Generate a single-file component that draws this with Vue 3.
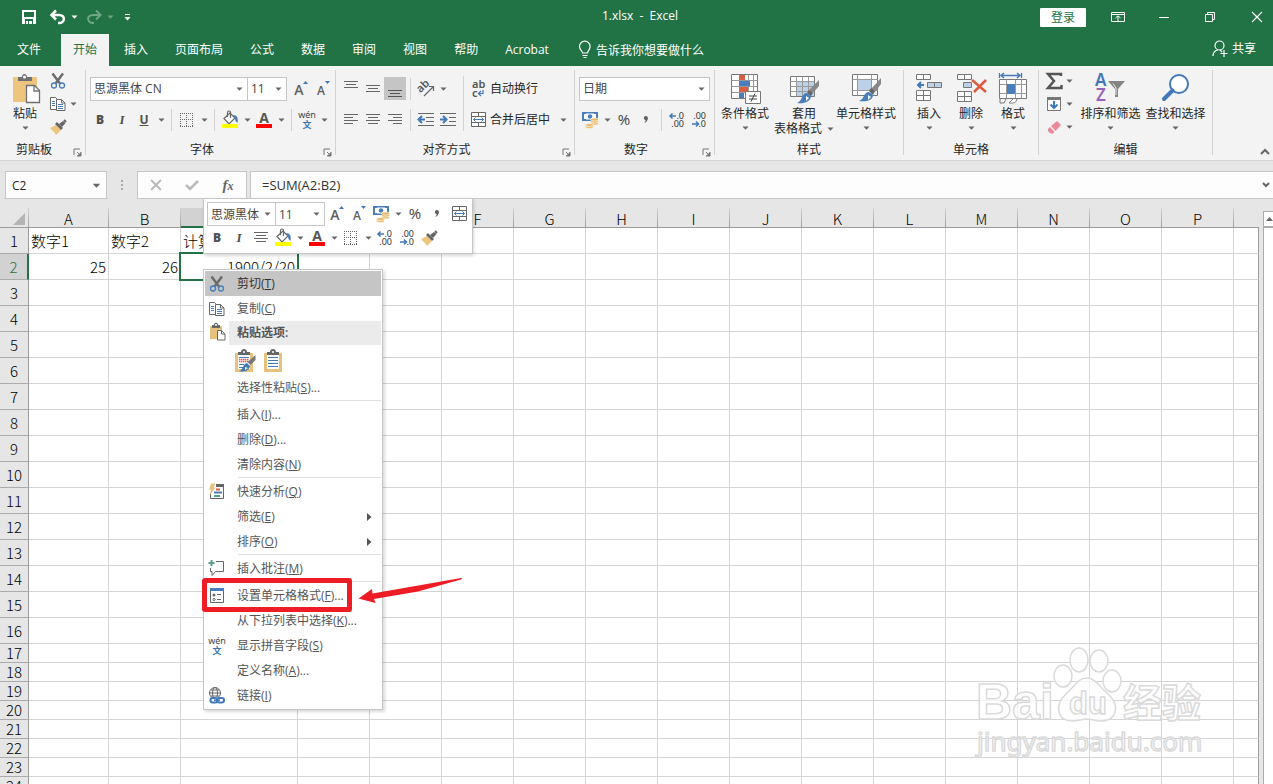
<script setup>
import { h } from 'vue'

const tabs = ['插入', '页面布局', '公式', '数据', '审阅', '视图', '帮助', 'Acrobat']

// Lettering that sits inside some of the toolbar icons.
const OS = 'Open Sans'
const NS = 'Noto Sans'
const letters = {
  bold: [{ t: 'B', x: 11, y: 15, a: 'middle', f: OS, w: 800, s: 12, c: '#505050' }],
  italic: [{ t: 'I', x: 11, y: 15, a: 'middle', f: 'Liberation Serif', w: 700, s: 13, c: '#505050', i: 1 }],
  underline: [{ t: 'U', x: 11, y: 15, a: 'middle', f: OS, w: 700, s: 12, c: '#505050' }],
  fontcolor: [{ t: 'A', x: 11, y: 14, a: 'middle', f: OS, w: 700, s: 14, c: '#555' }],
  pinyin: [
    { t: 'wén', x: 11, y: 9, a: 'middle', f: NS, w: 400, s: 9, c: '#444' },
    { t: '文', x: 11, y: 19, a: 'middle', f: 'Noto Sans CJK SC', w: 700, s: 9, c: '#3f76b5' },
  ],
  grow: [{ t: 'A', x: 9, y: 17, a: 'middle', f: OS, w: 600, s: 14, c: '#606060' }],
  shrink: [{ t: 'A', x: 9, y: 17, a: 'middle', f: OS, w: 600, s: 12, c: '#606060' }],
  orient: [{ t: 'ab', x: 3, y: 13, f: NS, w: 600, s: 11, c: '#555', r: 'rotate(-45 7 11)' }],
  wrap: [
    { t: 'ab', x: 5, y: 10, f: NS, w: 600, s: 11, c: '#555' },
    { t: 'c', x: 5, y: 19, f: NS, w: 600, s: 11, c: '#555' },
  ],
  percent: [{ t: '%', x: 11, y: 16, a: 'middle', f: OS, w: 400, s: 15, c: '#444' }],
  incdec: [
    { t: '.0', x: 18, y: 10, a: 'end', f: NS, w: 400, s: 9, c: '#333' },
    { t: '.00', x: 18, y: 18, a: 'end', f: NS, w: 400, s: 9, c: '#333' },
  ],
  decdec: [
    { t: '.00', x: 18, y: 10, a: 'end', f: NS, w: 400, s: 9, c: '#333' },
    { t: '.0', x: 18, y: 18, a: 'end', f: NS, w: 400, s: 9, c: '#333' },
  ],
  sortfilter: [
    { t: 'A', x: 0, y: 14, f: NS, w: 600, s: 17, c: '#4078b8' },
    { t: 'Z', x: 1, y: 29, f: NS, w: 600, s: 17, c: '#9562b8' },
  ],
}
const lettersOnly = ['bold', 'italic', 'pinyin', 'percent']

const Glyph = ({ n }) => h('svg', { viewBox: n === 'sortfilter' ? '0 0 32 32' : '0 0 22 22', 'aria-hidden': 'true' }, [
  lettersOnly.includes(n) ? null : h('use', { href: '#' + n }),
  ...(letters[n] || []).map(g => h('text', {
    x: g.x, y: g.y, fill: g.c, transform: g.r,
    'text-anchor': g.a, 'font-family': g.f, 'font-weight': g.w, 'font-size': g.s,
    'font-style': g.i ? 'italic' : undefined,
  }, g.t)),
])
Glyph.props = ['n']

const fontTools = [
  { i: 'bold', l: '加粗' }, { i: 'italic', l: '倾斜' }, { i: 'underline', l: '下划线', d: 1 }, 's',
  { i: 'border', l: '边框', d: 1 }, 's',
  { i: 'bucket', l: '填充颜色', d: 1 }, { i: 'fontcolor', l: '字体颜色', d: 1 }, 's',
  { i: 'pinyin', l: '拼音', d: 1 },
]
const alignTop = [{ i: 'vtop', l: '顶端对齐' }, { i: 'vmid', l: '垂直居中' }, { i: 'vbot', l: '底端对齐', on: 1 }, 's', { i: 'orient', l: '方向', d: 1 }]
const alignBottom = [{ i: 'left', l: '左对齐' }, { i: 'center', l: '居中' }, { i: 'right', l: '右对齐' }, 's', { i: 'outdent', l: '减少缩进量' }, { i: 'indent', l: '增加缩进量' }]
const numberTools = [{ i: 'money', l: '会计数字格式', d: 1 }, { i: 'percent', l: '百分比样式' }, { i: 'comma', l: '千位分隔样式' }, 's', { i: 'incdec', l: '增加小数位数' }, { i: 'decdec', l: '减少小数位数' }]
const miniTop = [{ i: 'grow', l: '增大字号' }, { i: 'shrink', l: '减小字号' }, { i: 'money', l: '会计数字格式', d: 1 }, { i: 'percent', l: '百分比样式' }, { i: 'comma', l: '千位分隔样式' }, { i: 'merge', l: '合并后居中' }]
const miniBottom = [{ i: 'bold', l: '加粗' }, { i: 'italic', l: '倾斜' }, { i: 'center', l: '居中' }, { i: 'bucket', l: '填充颜色', d: 1 }, { i: 'fontcolor', l: '字体颜色', d: 1 }, { i: 'border', l: '边框', d: 1 }, { i: 'incdec', l: '增加小数位数' }, { i: 'decdec', l: '减少小数位数' }, { i: 'brush', l: '格式刷' }]

const editTools = [{ i: 'sum', l: '自动求和' }, { i: 'fill', l: '填充' }, { i: 'eraser', l: '清除' }]

const menu = [
  { t: '剪切', k: 'T', i: 'cut', on: 1 },
  { t: '复制', k: 'C', i: 'copy' },
  { t: '粘贴选项:', i: 'paste', head: 1 },
  { icons: 1 },
  { t: '选择性粘贴', k: 'S', e: '...' },
  { sep: 1 },
  { t: '插入', k: 'I', e: '...' },
  { t: '删除', k: 'D', e: '...' },
  { t: '清除内容', k: 'N' },
  { sep: 1 },
  { t: '快速分析', k: 'Q', i: 'quick' },
  { t: '筛选', k: 'E', sub: 1 },
  { t: '排序', k: 'O', sub: 1 },
  { sep: 1 },
  { t: '插入批注', k: 'M', i: 'comment' },
  { sep: 1 },
  { t: '设置单元格格式', k: 'F', e: '...', i: 'format' },
  { t: '从下拉列表中选择', k: 'K', e: '...' },
  { t: '显示拼音字段', k: 'S', i: 'pinyin' },
  { t: '定义名称', k: 'A', e: '...' },
  { t: '链接', k: 'I', i: 'link' },
]

const cols = 'ABCDEFGHIJKLMNOP'.split('')
const rows = Array.from({ length: 24 }, (_, n) => n + 1)
const cells = {
  A1: '数字1', B1: '数字2', C1: '计算结果',
  A2: '25', B2: '26', C2: '1900/2/20',
}
</script>

<template>
  <div class="excel">
    <svg class="defs" aria-hidden="true">
      <symbol id="caret" viewBox="0 0 7 4"><path d="M.5 0.500h6L3.500 3.700z" fill="currentColor" /></symbol>
      <symbol id="launch" viewBox="0 0 9 9"><path d="M1 7V1h6M4 4l3 3M8 4v4H4" fill="none" stroke="#777" /><path d="M8 4v4H4z" fill="#777" /></symbol>
      <symbol id="underline" viewBox="0 0 22 22"><path d="M6.500 16.500h9" stroke="#505050" /></symbol>
      <symbol id="border" viewBox="0 0 22 22"><path d="M4.500 4v14M10.500 4v14M16.500 4v14" stroke="#666" stroke-dasharray="1 1" /><path d="M4 4.500h13M4 10.500h13M4 17.500h13" stroke="#666" stroke-dasharray="1 1" /></symbol>
      <symbol id="bucket" viewBox="0 0 22 22"><path d="M5 9.500L11 4l5 5-6 6z" fill="#fff" stroke="#666" stroke-width="1.200" /><path d="M8.500 8V3.500c0-2 3-2 3 0V9" fill="none" stroke="#666" stroke-width="1.200" /><path d="M14 6c4 0 5.500 3 4.500 8-1-1-2.500-2-2.500-4z" fill="#4a7ebb" /><path d="M3 15h16v4H3z" fill="#ff0" /></symbol>
      <symbol id="fontcolor" viewBox="0 0 22 22"><path d="M3 15h16v4H3z" fill="#f00" /></symbol>
      <symbol id="grow" viewBox="0 0 22 22"><path d="M13 6l2.500-3L18 6z" fill="#4078b8" /></symbol>
      <symbol id="shrink" viewBox="0 0 22 22"><path d="M13 3h5l-2.500 3z" fill="#4078b8" /></symbol>
      <symbol id="vtop" viewBox="0 0 22 22"><path d="M4 3.500h14M6 6.500h10M4 9.500h14" stroke="#666" /></symbol>
      <symbol id="vmid" viewBox="0 0 22 22"><path d="M4 7.500h14M6 10.500h10M4 13.500h14" stroke="#666" /></symbol>
      <symbol id="vbot" viewBox="0 0 22 22"><path d="M4 12.500h14M6 15.500h10M4 18.500h14" stroke="#555" /></symbol>
      <symbol id="left" viewBox="0 0 22 22"><path d="M4 5.500h14M4 8.500h9M4 11.500h14M4 14.500h9" stroke="#666" /></symbol>
      <symbol id="center" viewBox="0 0 22 22"><path d="M4 5.500h14M6 8.500h10M4 11.500h14M6 14.500h10" stroke="#666" /></symbol>
      <symbol id="right" viewBox="0 0 22 22"><path d="M4 5.500h14M9 8.500h9M4 11.500h14M9 14.500h9" stroke="#666" /></symbol>
      <symbol id="orient" viewBox="0 0 22 22"><path d="M9 18l9-9M14 8.500h4.500V13" fill="none" stroke="#666" stroke-width="1.200" /></symbol>
      <symbol id="outdent" viewBox="0 0 22 22"><path d="M3 4.500h16M11 8.500h8M11 12.500h8M3 16.500h16" stroke="#666" /><path d="M4 10.500h6M7 7l-3.500 3.500L7 14" fill="none" stroke="#4078b8" stroke-width="2" /></symbol>
      <symbol id="indent" viewBox="0 0 22 22"><path d="M3 4.500h16M12 8.500h7M12 12.500h7M3 16.500h16" stroke="#666" /><path d="M3 10.500h6M6 7l3.500 3.500L6 14" fill="none" stroke="#4078b8" stroke-width="2" /></symbol>
      <symbol id="wrap" viewBox="0 0 22 22"><path d="M16 12v3.500h-4M14 13l-2.500 2.500L14 18" fill="none" stroke="#4078b8" stroke-width="1.200" /></symbol>
      <symbol id="merge" viewBox="0 0 22 22"><path d="M4.500 3.500h14v14h-14zM4.500 7.500h14M4.500 13.500h14M11.500 3.500v4M11.500 13.500v4" fill="#fff" stroke="#666" /><path d="M6.500 10.500h10M8.500 8.500l-2 2 2 2M14.500 8.500l2 2-2 2" fill="none" stroke="#4078b8" /></symbol>
      <symbol id="money" viewBox="0 0 22 22"><path d="M3 3h16v9H3z" fill="#4a7ebb" /><path d="M5 5h2v-.500h8V5h2v5h-2v.500H7V10H5z" fill="#fff" /><circle cx="11" cy="7.500" r="2.200" fill="#4a7ebb" /><g fill="#e8b96c" stroke="#fff" stroke-width=".6"><ellipse cx="15.500" cy="14.500" rx="4" ry="1.600" /><ellipse cx="15.500" cy="12.500" rx="4" ry="1.600" /><ellipse cx="15.500" cy="10.500" rx="4" ry="1.600" /><ellipse cx="10.500" cy="18" rx="4" ry="1.500" /><ellipse cx="10.500" cy="16" rx="4" ry="1.500" /></g></symbol>
      <symbol id="comma" viewBox="0 0 22 22"><circle cx="10.800" cy="9" r="2" fill="#606060" /><path d="M12.800 8.500c0 3-1 4.500-3.500 5.500 1-1.500 1.500-2.500 1.500-4z" fill="#606060" /></symbol>
      <symbol id="incdec" viewBox="0 0 22 22"><path d="M4 7h6M6.500 4.500L4 7l2.500 2.500" fill="none" stroke="#4078b8" stroke-width="1.500" /></symbol>
      <symbol id="decdec" viewBox="0 0 22 22"><path d="M4 15h6M8 12.500l2.500 2.500L8 17.500" fill="none" stroke="#4078b8" stroke-width="1.500" /></symbol>
      <symbol id="cut" viewBox="0 0 22 22"><path d="M5.500 3.500l7.500 10M16 3.500l-7.500 10" stroke="#6c6c6c" stroke-width="2.500" /><circle cx="7" cy="15.500" r="2.500" fill="none" stroke="#4a7ebb" stroke-width="1.300" /><circle cx="15" cy="15.500" r="2.500" fill="none" stroke="#4a7ebb" stroke-width="1.300" /></symbol>
      <symbol id="copy" viewBox="0 0 22 22"><path d="M3.500 4.500h5l3 3v9h-8z" fill="#fff" stroke="#666" /><path d="M5 8.500h3M5 10.500h3M5 12.500h3" stroke="#4a7ebb" /><path d="M9.500 6.500h5l3.500 3.500v7.500H9.500z" fill="#fff" stroke="#666" /><path d="M14.500 6.500v3.500H18" fill="none" stroke="#666" /><path d="M11 11.500h5M11 13.500h5M11 15.500h5" stroke="#4a7ebb" /></symbol>
      <symbol id="brush" viewBox="0 0 22 22"><path d="M3 12l6-3 5 5-5 5c-1.500-3-3.500-4-6-7z" fill="#edc57f" /><path d="M8 8l6 6 2-2-6-6z" fill="#666" /><path d="M12 8l4-3 2.500 2-3.500 4z" fill="#666" /><path d="M17 4l2 2" stroke="#666" stroke-width="2" /></symbol>
      <symbol id="paste" viewBox="0 0 22 22"><path d="M4 5h12v13H4z" fill="#e8c17c" /><path d="M6 7V4h2c0-3 4-3 4 0h2v3z" fill="#666" /><circle cx="10" cy="4" r="1" fill="#fff" /><path d="M11.500 9.500h4l3.500 3.500v6h-7.500z" fill="#fff" stroke="#666" /><path d="M15.500 9.500V13H19" fill="none" stroke="#666" /></symbol>
      <symbol id="bigpaste" viewBox="0 0 32 32"><path d="M4 5h24v25H4z" fill="#edc57f" /><path d="M9 9V5h4c0-4 5-4 5 0h5v4z" fill="#707070" /><circle cx="15.500" cy="5" r="1.500" fill="#fff" /><path d="M17.500 13.500h8l5 5v12h-13z" fill="#fff" stroke="#707070" stroke-width="1.300" /><path d="M25 13.500V19h5.500" fill="none" stroke="#707070" stroke-width="1.300" /></symbol>
      <symbol id="sum" viewBox="0 0 22 22"><path d="M18 6V4H5l6 7-6 7h13.500v-3" fill="none" stroke="#555" stroke-width="2.500" /></symbol>
      <symbol id="fill" viewBox="0 0 22 22"><path d="M4.500 4.500h13v13h-13z" fill="#fff" stroke="#777" /><path d="M4 4h14v3H4z" fill="#777" /><path d="M11 8v7M7.500 11.500L11 15l3.500-3.500" fill="none" stroke="#4078b8" stroke-width="2" /></symbol>
      <symbol id="eraser" viewBox="0 0 22 22"><path d="M8 10l6-5 4 4-5.500 6z" fill="#e88a9a" /><path d="M7 11l4.500 5-1.500 1.500c-2 1-6-2-5-4.500z" fill="#e88a9a" /></symbol>
      <symbol id="quick" viewBox="0 0 22 22"><path d="M10 4.500h7.500v13H4.500V12" fill="#fff" stroke="#666" /><path d="M10 3h8v3h-8z" fill="#666" /><path d="M10 8.500h4" stroke="#d95f42" stroke-width="2" /><path d="M8 11.500h8" stroke="#4a7ebb" stroke-width="2" /><path d="M8 15h6" stroke="#58a083" stroke-width="2" /><path d="M5 2.500h4.500l-2 4h2l-6 8L5 8.500H3z" fill="#e8c17c" /></symbol>
      <symbol id="comment" viewBox="0 0 22 22"><path d="M10 3.500h7.500v10h-8l-3.500 4v-4H4.500V10" fill="none" stroke="#666" /><path d="M5.500 2v6M2.500 5h6" stroke="#58a083" stroke-width="2" /></symbol>
      <symbol id="format" viewBox="0 0 22 22"><path d="M4.500 4.500h13v13h-13z" fill="#fff" stroke="#666" /><path d="M4 3h14v3H4z" fill="#4a7ebb" /><circle cx="8" cy="10" r="1.500" fill="#666" /><circle cx="8" cy="14.500" r="1.100" fill="none" stroke="#666" /><path d="M11 9.500h4M11 14.500h4" stroke="#666" /></symbol>
      <symbol id="link" viewBox="0 0 22 22"><circle cx="9" cy="8" r="5.500" fill="#fff" stroke="#666" /><ellipse cx="9" cy="8" rx="2.500" ry="5.500" fill="none" stroke="#666" /><path d="M3.500 8h11M5 5h8M5 11h8" stroke="#666" /><rect x="3" y="12" width="16" height="7" fill="#fff" /><rect x="4.500" y="13" width="7" height="4.500" rx="2.200" fill="none" stroke="#4078b8" stroke-width="2" /><rect x="11" y="13" width="7" height="4.500" rx="2.200" fill="none" stroke="#4078b8" stroke-width="2" /><path d="M8 15.200h6" stroke="#4078b8" stroke-width="1.500" /></symbol>
      <symbol id="cond" viewBox="0 0 32 32"><path d="M2.500 2.500h26v24h-26z" fill="#fff" stroke="#777" /><path d="M10.500 2.500v24M19.500 2.500v24M24.500 2.500v24M2.500 8.500h26M2.500 14.500h26M2.500 20.500h26" stroke="#999" /><path d="M10 3h6v5h-6zM10 15h9v5h-9z" fill="#d95f42" /><path d="M10 9h11v5H10zM10 21h5v5h-5z" fill="#4a7ebb" /><path d="M16.500 19.500h15v12h-15z" fill="#fff" stroke="#777" /><path d="M20 24h8M20 27h8M26 21.500l-4 8" stroke="#444" /></symbol>
      <symbol id="tablefmt" viewBox="0 0 32 32"><path d="M2.500 4.500h24v20h-24z" fill="#fff" stroke="#777" /><path d="M9 10h17v14H9z" fill="#bcd0e8" /><path d="M8.500 4.500v20M14.500 4.500v20M20.500 4.500v20M2.500 9.500h24M2.500 14.500h24M2.500 19.500h24" stroke="#999" /><path d="M31 8v6l-6 7-4-3z" fill="#888" /><path d="M21 18l4 3-2 3-4-3z" fill="#666" /><path d="M19 21l4 3c0 6-8 8-14 7 6-2 4-10 10-10z" fill="#4a7ebb" /><path d="M18 24l3 2-3 3z" fill="#fff" /></symbol>
      <symbol id="cellstyle" viewBox="0 0 32 32"><path d="M2.500 2.500h25v21h-25z" fill="#fff" stroke="#777" /><path d="M2.500 7.500h25M2.500 18.500h25M7.500 2.500v21M21.500 2.500v21" stroke="#999" /><path d="M8 8h13v10H8z" fill="#bcd0e8" /><path d="M31 6v6l-6 8-4-3z" fill="#888" /><path d="M21 16l4 3-2 4-4-4z" fill="#666" /><path d="M19 20l4 3c0 6-8 7-14 6 6-2 4-9 10-9z" fill="#4a7ebb" /><path d="M18 23l3 2-3 3z" fill="#fff" /></symbol>
      <symbol id="insert" viewBox="0 0 32 32"><path d="M3.500 2.500h14v5h-14zM10.500 2.500v5M3.500 18.500h14v10h-14zM10.500 18.500v10M3.500 23.500h14" fill="#fff" stroke="#777" /><path d="M14.500 10.500h14v5h-14zM21.500 10.500v5" fill="#bcd0e8" stroke="#777" /><path d="M5 13h6M8 10l-3 3 3 3" fill="none" stroke="#4078b8" stroke-width="2" /></symbol>
      <symbol id="delete" viewBox="0 0 32 32"><path d="M2.500 2.500h14v5h-14zM9.500 2.500v5M2.500 19.500h14v10h-14zM9.500 19.500v10M2.500 24.500h14" fill="#fff" stroke="#777" /><path d="M8.500 10.500h8v5h-8z" fill="#bcd0e8" stroke="#777" /><path d="M17 8l14 12M31 8L19 20" stroke="#df5b40" stroke-width="2.500" /></symbol>
      <symbol id="cellfmt" viewBox="0 0 32 32"><path d="M2.500 7.500h27v19h-27z" fill="#fff" stroke="#777" /><path d="M9.500 7.500v19M18.500 7.500v19M24.500 7.500v19M2.500 12.500h27M2.500 21.500h27" stroke="#999" /><path d="M10 12h8v10h-8z" fill="#4a7ebb" /><path d="M2.500 1v5M24.500 1v5M4 3.500h19M7 1L4 3.500 7 6M20 1l3 2.500L20 6" fill="none" stroke="#4078b8" stroke-width="1.300" /><path d="M3 31v-4M9 27l-2 4H3M20 27c-1 5-5 4-8 4l4-4" fill="#fff" stroke="#777" /></symbol>
      <symbol id="sortfilter" viewBox="0 0 32 32"><path d="M13 9h17l-7 8v8h-3v-8z" fill="#858585" /><path d="M18 11.500l3 4.500v7" fill="none" stroke="#eee" /></symbol>
      <symbol id="find" viewBox="0 0 32 32"><circle cx="19" cy="12" r="9" fill="#fff" stroke="#4078b8" stroke-width="2" /><path d="M12.500 18.500L4 27" stroke="#4078b8" stroke-width="4" stroke-linecap="round" /></symbol>
      <symbol id="clipfmt" viewBox="0 0 24 24"><path d="M2 4h18v19H2z" fill="#e8c17c" /><path d="M5 6h12v14H5z" fill="#fff" /><path d="M5 6V3h3c0-4 6-4 6 0h3v3z" fill="#666" /><circle cx="11" cy="3" r="1" fill="#fff" /><path d="M6 8.500h10M6 15.500h5M6 18.500h4" stroke="#4a7ebb" /><path d="M6 10.500h10M6 12.500h10" stroke="#df6346" stroke-width="1.500" stroke-dasharray="1.500 .5" /><path d="M22.500 6v5l-5 5-3-3z" fill="#777" /><path d="M14 14l3 3c-1 5-6 6-11 5.500 4-1.500 4-8 8-8.500z" fill="#4078b8" /><path d="M12 18l3 1-3 2z" fill="#fff" /></symbol>
      <symbol id="clipval" viewBox="0 0 24 24"><path d="M2 4h18v19H2z" fill="#e8c17c" /><path d="M5 6h12v14H5z" fill="#fff" /><path d="M5 6V3h3c0-4 6-4 6 0h3v3z" fill="#666" /><circle cx="11" cy="3" r="1" fill="#fff" /><path d="M6 8.500h10M6 11.500h10M6 14.500h10M6 17.500h10" stroke="#4078b8" /></symbol>
    </svg>

    <header class="titlebar">
      <div class="qat">
        <button aria-label="保存"><svg width="16" height="16" viewBox="0 0 16 16"><path d="M1 1h14v14H1z" fill="#fff" /><path d="M3 3h10v5H3zM4 10h8v5H4z" fill="#217346" /><path d="M5 12h2v3H5zM8 12h3v3H8z" fill="#fff" /></svg></button>
        <button aria-label="撤消"><svg width="18" height="16" viewBox="0 0 18 16"><path d="M3 6h7c7 0 6 8 0 8H9M7 1.500L2.500 6 7 10.500" fill="none" stroke="#fff" stroke-width="2.500" /></svg></button>
        <button class="dd" aria-label="撤消列表"><svg class="white" width="7" height="4"><use href="#caret" /></svg></button>
        <button class="dim" aria-label="恢复"><svg width="18" height="16" viewBox="0 0 18 16"><path d="M15 6H8C1 6 2 14 8 14h1M11 1.500L15.500 6 11 10.500" fill="none" stroke="#fff" stroke-width="2" /></svg></button>
        <button class="dd dim" aria-label="恢复列表"><svg class="white" width="7" height="4"><use href="#caret" /></svg></button>
        <button class="more" aria-label="自定义快速访问工具栏"><svg width="7" height="8" viewBox="0 0 7 8"><path d="M1 1.500h5" stroke="#fff" /><path d="M.5 4h6l-3 3.500z" fill="#fff" /></svg></button>
      </div>
      <div class="title">1.xlsx&nbsp; -&nbsp; Excel</div>
      <div class="winbtns">
        <button class="login">登录</button>
        <button aria-label="功能区显示选项"><svg width="14" height="12" viewBox="0 0 14 12"><path d="M.5 1.500h13v9H.5zM.5 3.500h13M7 10V5M4.500 7L7 4.800 9.500 7" fill="none" stroke="#fff" /></svg></button>
        <button aria-label="最小化"><svg width="10" height="10" viewBox="0 0 10 10"><path d="M0 5.500h10" stroke="#fff" /></svg></button>
        <button aria-label="还原"><svg width="10" height="10" viewBox="0 0 10 10"><path d="M.5 2.500h7v7h-7zM2.500 2V.500h7v7H8" fill="none" stroke="#fff" /></svg></button>
        <button class="close" aria-label="关闭"><svg width="12" height="12" viewBox="0 0 12 12"><path d="M1 1l10 10M11 1L1 11" stroke="#fff" stroke-width="1.200" /></svg></button>
      </div>
    </header>

    <nav class="tabs">
      <button class="tab file">文件</button>
      <button class="tab active">开始</button>
      <button v-for="t in tabs" :key="t" class="tab">{{ t }}</button>
      <button class="tell"><svg width="14" height="18" viewBox="0 0 14 18"><path d="M4.500 12c0-2-3-3-3-6.500a5.300 5.300 0 0110.600 0C12.100 9 9.500 10 9.500 12zM4.500 14.500h5M5.500 16.500h3" fill="none" stroke="#fff" stroke-width="1.200" /></svg>告诉我你想要做什么</button>
      <button class="share"><svg width="16" height="17" viewBox="0 0 16 17"><circle cx="7.500" cy="5.500" r="4.500" fill="none" stroke="#fff" stroke-width="1.200" /><path d="M1 16c0-3 2-6 5-6M8 10l2 2M8.500 13.500h7M12 10v7" fill="none" stroke="#fff" stroke-width="1.200" /></svg>共享</button>
    </nav>

    <section class="ribbon">
      <div class="group g-clip">
        <div class="body">
          <button class="big"><svg class="i32"><use href="#bigpaste" /></svg>粘贴<svg class="caret"><use href="#caret" /></svg></button>
          <div class="stack">
            <div class="srow"><button class="tb" aria-label="剪切"><Glyph class="i22" n="cut" /></button></div>
            <div class="srow"><button class="tb" aria-label="复制"><Glyph class="i22" n="copy" /></button><button class="dd" aria-label="复制选项"><svg class="caret"><use href="#caret" /></svg></button></div>
            <div class="srow"><button class="tb" aria-label="格式刷"><Glyph class="i22" n="brush" /></button></div>
          </div>
        </div>
        <div class="foot">剪贴板<button class="launch" aria-label="剪贴板设置"><svg width="9" height="9"><use href="#launch" /></svg></button></div>
      </div>

      <div class="group g-font">
        <div class="body rows">
          <div class="row pad">
            <span class="sel w-font"><select aria-label="字体"><option>思源黑体 CN</option></select><svg class="caret"><use href="#caret" /></svg></span>
            <span class="sel w-size"><select aria-label="字号"><option>11</option></select><svg class="caret"><use href="#caret" /></svg></span>
            <button class="tb grow" aria-label="增大字号"><Glyph class="i22" n="grow" /></button>
            <button class="tb" aria-label="减小字号"><Glyph class="i22" n="shrink" /></button>
          </div>
          <div class="row">
            <template v-for="(b, n) in fontTools" :key="n">
              <i v-if="b === 's'" class="sep"></i>
              <template v-else>
                <button class="tb" :aria-label="b.l"><Glyph class="i22" :n="b.i" /></button>
                <button v-if="b.d" class="dd" :aria-label="b.l + '选项'"><svg class="caret"><use href="#caret" /></svg></button>
              </template>
            </template>
          </div>
        </div>
        <div class="foot">字体<button class="launch" aria-label="字体设置"><svg width="9" height="9"><use href="#launch" /></svg></button></div>
      </div>

      <div class="group g-align">
        <div class="body">
          <div class="rows alignleft">
            <div v-for="(r, k) in [alignTop, alignBottom]" :key="k" class="row">
              <template v-for="(b, n) in r" :key="n">
                <i v-if="b === 's'" class="sep"></i>
                <template v-else>
                  <button class="tb" :class="{ on: b.on }" :aria-label="b.l"><Glyph class="i22" :n="b.i" /></button>
                  <button v-if="b.d" class="dd" :aria-label="b.l + '选项'"><svg class="caret"><use href="#caret" /></svg></button>
                </template>
              </template>
            </div>
          </div>
          <i class="tall"></i>
          <div class="rows wide">
            <div class="row"><button class="tx"><Glyph class="i22" n="wrap" />自动换行</button></div>
            <div class="row"><button class="tx"><Glyph class="i22" n="merge" />合并后居中</button><button class="dd end" aria-label="合并选项"><svg class="caret"><use href="#caret" /></svg></button></div>
          </div>
        </div>
        <div class="foot">对齐方式<button class="launch" aria-label="对齐设置"><svg width="9" height="9"><use href="#launch" /></svg></button></div>
      </div>

      <div class="group g-num">
        <div class="body rows">
          <div class="row pad">
            <span class="sel w-num"><select aria-label="数字格式"><option>日期</option></select><svg class="caret"><use href="#caret" /></svg></span>
          </div>
          <div class="row pad">
            <template v-for="(b, n) in numberTools" :key="n">
              <i v-if="b === 's'" class="sep"></i>
              <template v-else>
                <button class="tb" :aria-label="b.l"><Glyph class="i22" :n="b.i" /></button>
                <button v-if="b.d" class="dd" :aria-label="b.l + '选项'"><svg class="caret"><use href="#caret" /></svg></button>
              </template>
            </template>
          </div>
        </div>
        <div class="foot">数字<button class="launch" aria-label="数字设置"><svg width="9" height="9"><use href="#launch" /></svg></button></div>
      </div>

      <div class="group g-style">
        <div class="body">
          <button class="big"><svg class="i32"><use href="#cond" /></svg>条件格式<svg class="caret"><use href="#caret" /></svg></button>
          <button class="big"><svg class="i32"><use href="#tablefmt" /></svg>套用<span class="two">表格格式<svg class="caret"><use href="#caret" /></svg></span></button>
          <button class="big"><svg class="i32"><use href="#cellstyle" /></svg>单元格样式<svg class="caret"><use href="#caret" /></svg></button>
        </div>
        <div class="foot">样式</div>
      </div>

      <div class="group g-cell">
        <div class="body">
          <button class="big"><svg class="i32"><use href="#insert" /></svg>插入<svg class="caret"><use href="#caret" /></svg></button>
          <button class="big"><svg class="i32"><use href="#delete" /></svg>删除<svg class="caret"><use href="#caret" /></svg></button>
          <button class="big"><svg class="i32"><use href="#cellfmt" /></svg>格式<svg class="caret"><use href="#caret" /></svg></button>
        </div>
        <div class="foot">单元格</div>
      </div>

      <div class="group g-edit">
        <div class="body">
          <div class="stack">
            <div v-for="b in editTools" :key="b.i" class="srow"><button class="tb" :aria-label="b.l"><Glyph class="i22" :n="b.i" /></button><button class="dd" :aria-label="b.l + '选项'"><svg class="caret"><use href="#caret" /></svg></button></div>
          </div>
          <button class="big"><Glyph class="i32" n="sortfilter" />排序和筛选<svg class="caret"><use href="#caret" /></svg></button>
          <button class="big"><svg class="i32"><use href="#find" /></svg>查找和选择<svg class="caret"><use href="#caret" /></svg></button>
        </div>
        <div class="foot">编辑</div>
      </div>
      <button class="collapse" aria-label="折叠功能区"><svg width="10" height="7" viewBox="0 0 10 7"><path d="M1 6l4-4 4 4" fill="none" stroke="#666" stroke-width="2" /></svg></button>
    </section>

    <section class="formulabar">
      <div class="namebox"><input aria-label="名称框" value="C2"><button aria-label="名称列表"><svg width="9" height="5"><use href="#caret" /></svg></button></div>
      <div class="dots"><i></i><i></i><i></i></div>
      <div class="fx">
        <button aria-label="取消"><svg width="12" height="12" viewBox="0 0 12 12"><path d="M1 1l10 10M11 1L1 11" stroke="#bbb" stroke-width="2" /></svg></button>
        <button aria-label="输入"><svg width="14" height="12" viewBox="0 0 14 12"><path d="M1 6l4 4 8-8" fill="none" stroke="#bbb" stroke-width="2.500" /></svg></button>
        <button class="fn" aria-label="插入函数">f<small>x</small></button>
      </div>
      <div class="formula"><input aria-label="编辑栏" value="=SUM(A2:B2)"><button aria-label="展开编辑栏"><svg width="8" height="6" viewBox="0 0 8 6"><path d="M1 1l3 3 3-3" fill="none" stroke="#666" stroke-width="2" /></svg></button></div>
    </section>

    <main class="sheet">
      <div class="gridwrap">
        <table class="grid">
          <colgroup><col class="c-head"><col v-for="c in cols" :key="c" :class="'c-' + c"><col></colgroup>
          <thead>
            <tr><th class="corner"><svg width="12" height="12" viewBox="0 0 12 12"><path d="M12 0v12H0z" fill="#b4b4b4" /></svg></th><th v-for="c in cols" :key="c" :class="{ cur: c === 'C' }">{{ c }}</th><th></th></tr>
          </thead>
          <tbody>
            <tr v-for="r in rows" :key="r" :class="{ short: r > 16 }">
              <th :class="{ cur: r === 2 }">{{ r }}</th>
              <td v-for="c in cols" :key="c" :class="{ num: r === 2, picked: c + r === 'C2' }">{{ cells[c + r] }}</td>
              <td class="last"></td>
            </tr>
          </tbody>
        </table>
      </div>
      <div class="scroll"><button aria-label="向上滚动"><svg width="7" height="4" viewBox="0 0 7 4"><path d="M0 4l3.500-4L7 4z" fill="#666" /></svg></button><div class="thumb"></div></div>
    </main>

    <svg class="watermark" width="240" height="120" viewBox="0 0 240 120" aria-hidden="true">
      <g fill="#fff" fill-opacity=".75" stroke="#dadada" stroke-width="1.500">
        <text x="5" y="74" font-family="Liberation Sans" font-weight="700" font-size="50">Bai</text>
        <ellipse cx="92" cy="31" rx="9" ry="11" /><ellipse cx="108" cy="15" rx="9" ry="12" /><ellipse cx="128" cy="16" rx="9" ry="11" /><ellipse cx="141" cy="36" rx="9" ry="11" />
        <path d="M116 33c8 0 12 8 20 15 14 12 10 28-6 28-6 0-9-2-14-2s-9 2-15 2c-15 0-18-16-6-27 9-8 12-16 21-16z" />
        <text x="98" y="69" font-family="Liberation Sans" font-weight="700" font-size="31">du</text>
        <text x="152" y="72" font-family="Noto Sans CJK SC" font-weight="700" font-size="39">经验</text>
        <text x="6" y="106" font-family="Noto Sans" font-weight="400" font-size="26">jingyan.baidu.com</text>
      </g>
    </svg>

    <div class="mini">
      <div class="mrow">
        <span class="sel w-mfont"><select aria-label="字体"><option>思源黑体</option></select><svg class="caret"><use href="#caret" /></svg></span>
        <span class="sel w-msize"><select aria-label="字号"><option>11</option></select><svg class="caret"><use href="#caret" /></svg></span>
        <template v-for="b in miniTop" :key="b.i">
          <button class="tb" :aria-label="b.l"><Glyph class="i22" :n="b.i" /></button>
          <button v-if="b.d" class="dd" :aria-label="b.l + '选项'"><svg class="caret"><use href="#caret" /></svg></button>
        </template>
      </div>
      <div class="mrow">
        <template v-for="b in miniBottom" :key="b.i">
          <button class="tb" :aria-label="b.l"><Glyph class="i22" :n="b.i" /></button>
          <button v-if="b.d" class="dd" :aria-label="b.l + '选项'"><svg class="caret"><use href="#caret" /></svg></button>
        </template>
      </div>
    </div>

    <div class="menu">
      <template v-for="(m, n) in menu" :key="n">
        <hr v-if="m.sep">
        <div v-else-if="m.icons" class="pasteopts">
          <button aria-label="粘贴"><svg width="24" height="24"><use href="#clipfmt" /></svg></button>
          <button aria-label="值"><svg width="24" height="24"><use href="#clipval" /></svg></button>
        </div>
        <div v-else-if="m.head" class="item head"><span class="ico"><Glyph class="i22" n="paste" /></span><span class="lbl">{{ m.t }}</span></div>
        <button v-else class="item" :class="{ on: m.on }">
          <span class="ico"><Glyph v-if="m.i" class="i22" :n="m.i" /></span>
          <span class="lbl">{{ m.t }}(<u>{{ m.k }}</u>){{ m.e }}</span>
          <svg v-if="m.sub" class="sub" width="5" height="8" viewBox="0 0 5 8"><path d="M0 0l4.500 4L0 8z" fill="#555" /></svg>
        </button>
      </template>
    </div>

    <div class="redbox"></div>
    <svg class="arrow" width="106" height="28" viewBox="0 0 106 28" aria-hidden="true"><path d="M.5 21.500L14 12l.5 4.500L103 1c1.500 0 1.500 1 0 1.500L60 14.500 16 22l1.500 4z" fill="#ee1c24" /></svg>
  </div>
</template>

<style>
body { margin: 0; overflow: hidden; }
</style>

<style scoped>
.excel { position: relative; display: flex; flex-direction: column; height: 100vh; overflow: hidden; background: #e6e6e6; font: 12px/15px "Open Sans", "Noto Sans CJK SC", sans-serif; color: #262626; }
.defs { position: absolute; width: 0; height: 0; }
button, input, select { font: inherit; color: inherit; border: 0; background: none; padding: 0; margin: 0; }
button { display: flex; align-items: center; justify-content: center; white-space: nowrap; flex: none; }
svg { flex: none; display: block; overflow: visible; }
i { display: block; flex: none; }

.titlebar { display: flex; align-items: center; height: 34px; background: #217346; color: #fff; flex: none; }
.qat { flex: 1; display: flex; align-items: center; height: 32px; }
.qat button { width: 22px; height: 22px; margin-right: 7px; }
.qat button:first-child { margin-left: 18px; }
.qat button:nth-child(2), .qat button:nth-child(4) { margin-right: 0; }
.qat button.dd { width: 10px; margin-right: 4px; }
.qat button.more { width: 16px; }
.qat .dim { opacity: .35; }
.white { color: #fff; }
.title { padding-left: 7px; height: 32px; line-height: 30px; white-space: nowrap; }
.winbtns { flex: 1; display: flex; justify-content: flex-end; align-items: center; height: 32px; }
.winbtns button { width: 46px; height: 32px; }
.winbtns .login { height: 19px; margin-right: 9px; background: #fff; color: #217346; border-radius: 1px; }
.winbtns .close { width: 40px; padding-left: 8px; box-sizing: border-box; }

.tabs { display: flex; height: 32px; background: #217346; color: #fff; padding-left: 5px; gap: 3px; flex: none; }
.tab { padding: 0 12px 2px; }
.tab.file { margin-right: 5px; }
.tab.active { background: #f3f3f3; color: #217346; }
.tell { margin-left: 14px; gap: 4px; }
.share { margin-left: auto; margin-right: 17px; gap: 4px; padding-bottom: 3px; }

.ribbon { display: flex; background: #f3f3f3; border-bottom: 1px solid #d2d2d2; height: 94px; flex: none; }
.group { position: relative; display: flex; flex-direction: column; flex: none; box-sizing: border-box; }
.group::after { content: ""; position: absolute; right: 0; top: 4px; bottom: 5px; width: 1px; background: #d2d2d2; }
.g-clip { width: 86px; } .g-font { width: 250px; } .g-align { width: 239px; } .g-num { width: 140px; }
.g-style { width: 189px; } .g-cell { width: 135px; } .g-edit { width: 174px; }
.body { display: flex; flex: 1; }
.rows { display: flex; flex-direction: column; }
.body.rows, .alignleft, .wide { padding-top: 7px; }
.row { display: flex; align-items: center; height: 31px; padding-left: 3px; }
.foot { height: 22px; text-align: center; line-height: 23px; padding-right: 18px; }
.g-style .foot, .g-cell .foot, .g-edit .foot { padding-right: 1px; }
.launch { position: absolute; right: 4px; bottom: 3px; }
.tb { width: 22px; height: 22px; }
.tb.on { background: #c5c5c5; height: 23px; }
.i22 { width: 22px; height: 22px; }
.i32 { width: 32px; height: 32px; margin-bottom: 2px; }
.dd { width: 12px; height: 22px; color: #666; }
.caret { width: 7px; height: 4px; color: #666; }
.sep { width: 1px; height: 22px; background: #d2d2d2; margin: 0 4px; }
.tall { width: 1px; height: 55px; background: #d2d2d2; margin-top: 10px; }
.big { flex-direction: column; justify-content: flex-start; padding-top: 6px; }
.big > .caret { margin-top: 5px; }
.two { display: flex; align-items: center; gap: 5px; }
.g-clip .big { width: 44px; margin-left: 3px; }
.stack { display: flex; flex-direction: column; padding-top: 3px; }
.srow { display: flex; height: 23px; align-items: center; }
.srow .dd { margin-left: -2px; }
.alignleft { width: 127px; }
.alignleft .row { padding-left: 4px; }
.wide { flex: 1; }
.wide .row { padding-right: 6px; }
.tx { gap: 1px; }
.end { margin-left: auto; }
.g-style .big { width: 60px; }
.g-style .big:nth-child(2) { width: 58px; }
.g-style .big:nth-child(3) { width: 66px; }
.g-cell .body { padding-left: 4px; }
.g-cell .big { width: 42px; }
.g-edit .body { padding-left: 4px; }
.g-edit .stack { width: 35px; }
.g-edit .big { width: 65px; }
.collapse { margin-left: auto; align-self: flex-end; width: 16px; height: 18px; }

.sel { display: flex; align-items: center; position: relative; height: 24px; box-sizing: border-box; border: 1px solid #c6c6c6; background: #fff; }
.sel select { appearance: none; width: 100%; height: 22px; padding-left: 3px; color: #444; }
.sel .caret { position: absolute; right: 4px; pointer-events: none; }
.row.pad { padding-left: 4px; }
.w-font { width: 158px; } .w-size { width: 39px; border-left: 0; } .w-num { width: 131px; }
.grow { margin-left: 3px; }

.formulabar { display: flex; height: 28px; padding: 10px 0 9px 5px; flex: none; }
.namebox, .fx, .formula { display: flex; box-sizing: border-box; border: 1px solid #c6c6c6; background: #fdfdfd; height: 28px; align-items: center; }
.namebox { width: 102px; }
.namebox input { flex: 1; min-width: 0; padding-left: 6px; }
.namebox button { width: 20px; color: #666; }
.dots { width: 30px; display: flex; flex-direction: column; gap: 2px; align-items: center; justify-content: center; }
.dots i { width: 2px; height: 2px; background: #aaa; }
.fx { width: 110px; }
.fx button { width: 36px; height: 26px; }
.fx .fn { font: italic bold 15px "Liberation Serif", serif; color: #666; }
.fn small { font-size: 12px; padding-top: 3px; }
.formula { flex: 1; margin-left: 3px; border-right: 0; }
.formula input { flex: 1; padding-left: 11px; font-size: 13px; color: #333; }
.formula button { width: 14px; }

.sheet { flex: 1; display: flex; min-height: 0; }
.gridwrap { flex: 1; min-width: 0; overflow: hidden; }
.grid { width: 100%; table-layout: fixed; border-collapse: separate; border-spacing: 0; font: 300 15px/18px "Noto Sans CJK SC", sans-serif; color: #000; }
.c-head { width: 29px; } .c-A { width: 80px; } .c-C { width: 117px; }
.c-B, .c-D, .c-E, .c-F, .c-G, .c-H, .c-I, .c-J, .c-K, .c-L, .c-M, .c-N, .c-O, .c-P { width: 72px; }
th, td { box-sizing: border-box; padding: 0; font-weight: 300; white-space: nowrap; }
thead th { height: 20px; border-bottom: 1px solid #9b9b9b; border-right: 1px solid #ababab; border-image: linear-gradient(#d5d5d5, #9b9b9b) 1; border-top: 0; border-left: 0; line-height: 17px; padding-top: 2px; }
thead th:last-child { border-right-width: 0; }
thead .cur { background: #d2d2d2; color: #217346; border-bottom: 2px solid #217346; border-image: none; line-height: 16px; }
thead .corner { padding: 0; }
.corner svg { margin: 3px 3px 1px auto; }
tbody th { height: 26px; background: #e6e6e6; border-right: 1px solid #9b9b9b; border-bottom: 1px solid #ababab; }
tbody th.cur { background: #d2d2d2; color: #217346; border-right: 2px solid #217346; }
tbody td { background: #fff; border-right: 1px solid #d4d4d4; border-bottom: 1px solid #d4d4d4; padding: 0 2px; }
.num { text-align: right; }
.picked { position: relative; }
.picked::after { content: ""; position: absolute; left: -2px; top: -2px; right: -2px; bottom: -2px; border: 2px solid #217346; }
.last { border-right-color: #9b9b9b; }
.short th, .short td { height: 19px; }
.scroll { width: 10px; margin-left: 4px; margin-top: 3px; border-left: 1px solid #ababab; border-top: 1px solid #ababab; box-sizing: border-box; overflow: hidden; background: #e6e6e6; }
.scroll button { height: 14px; width: 10px; background: #fff; }
.thumb { height: 100%; border-top: 2px solid #ababab; background: #fff; }

.mini { position: absolute; left: 203px; top: 198px; width: 270px; height: 56px; box-sizing: border-box; border: 1px solid #c6c6c6; background: #fff; padding: 3px 0 0 2px; box-shadow: 1px 2px 3px rgba(0, 0, 0, .15); }
.mrow { display: flex; align-items: center; height: 24px; }
.w-mfont { width: 69px; margin-left: 1px; } .w-msize { width: 49px; border-left: 0; margin-right: 1px; }
.menu { position: absolute; left: 203px; top: 269px; width: 180px; box-sizing: border-box; border: 1px solid #c6c6c6; background: #fff; padding: 1px; box-shadow: 2px 2px 3px rgba(0, 0, 0, .15); color: #555; }
.item { display: flex; justify-content: flex-start; width: 100%; height: 25px; align-items: center; }
.item.on { background: #c5c5c5; color: #333; }
.item.head { align-items: flex-start; }
.ico { width: 24px; display: flex; justify-content: center; flex: none; }
.lbl { padding-left: 8px; }
.head .lbl { flex: 1; height: 24px; line-height: 24px; background: #ebebeb; font-weight: 600; }
.sub { margin-left: auto; margin-right: 9px; }
.menu hr { border: 0; border-top: 1px solid #dfdfdf; height: 1px; margin: 0 0 0 33px; }
.pasteopts { display: flex; height: 29px; align-items: center; gap: 5px; padding-left: 28px; }

.redbox { position: absolute; left: 202px; top: 578px; width: 150px; height: 34px; box-sizing: border-box; border: 5px solid #ee1c24; border-radius: 3px; }
.arrow { position: absolute; left: 358px; top: 577px; }
.watermark { position: absolute; right: 62px; bottom: 19px; }
</style>
